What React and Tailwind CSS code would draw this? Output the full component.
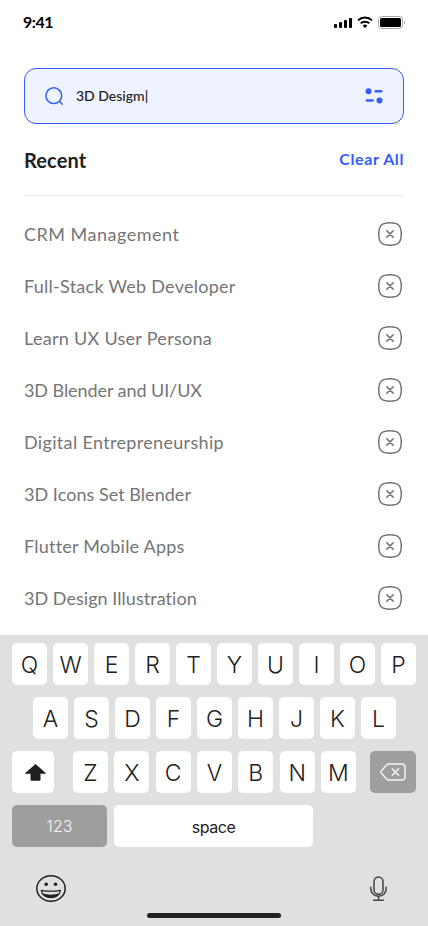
import { useState } from 'react';

const initialSearches = [
  { label: 'CRM Management', spacing: 'tracking-[0.5px]' },
  { label: 'Full-Stack Web Developer', spacing: 'tracking-[0.26px]' },
  { label: 'Learn UX User Persona', spacing: 'tracking-[0.29px]' },
  { label: '3D Blender and UI/UX', spacing: 'tracking-[-0.07px]' },
  { label: 'Digital Entrepreneurship', spacing: 'tracking-[0.33px]' },
  { label: '3D Icons Set Blender', spacing: 'tracking-[0.04px]' },
  { label: 'Flutter Mobile Apps', spacing: 'tracking-[0.22px]' },
  { label: '3D Design Illustration', spacing: 'tracking-[0.04px]' },
];

function StatusBar() {
  return (
    <div className="flex h-11 items-center justify-between pl-[23px] pr-[23px]">
      <span className="text-base leading-5 font-bold tracking-[-0.45px] text-black">9:41</span>
      <div className="flex items-center">
        <svg width="18" height="12" viewBox="0 0 18 12" className="mr-[5px]">
          <rect x="0" y="8" width="3" height="4" rx="1" />
          <rect x="5" y="6" width="3" height="6" rx="1" />
          <rect x="10" y="4" width="3" height="8" rx="1" />
          <rect x="15" y="2" width="3" height="10" rx="1" />
        </svg>
        <svg width="16" height="12" viewBox="0 0 16 12" className="mr-[5px]" fill="none" stroke="#000" strokeWidth="2">
          <path d="M1 4.4a10.1 10.1 0 0 1 14 0" />
          <path d="M3.7 7.4a6.2 6.2 0 0 1 8.6 0" />
          <path d="M8 12 5.7 9.7a3.3 3.3 0 0 1 4.6 0z" fill="#000" stroke="none" />
        </svg>
        <svg width="27" height="13" viewBox="0 0 27 13">
          <rect x="0.5" y="0.5" width="24" height="12" rx="3" fill="none" stroke="#a6a6a6" />
          <rect x="2" y="2" width="21" height="9" rx="1.5" />
          <path d="M26 4.5v4c.7-.3 1-1.1 1-2s-.3-1.7-1-2z" fill="#a6a6a6" />
        </svg>
      </div>
    </div>
  );
}

function SearchField({ value }) {
  return (
    <div className="flex h-14 items-center rounded-xl border border-[#335ef7] bg-[#eff3ff] px-5">
      <svg width="20" height="20" viewBox="0 0 20 20" fill="none" stroke="#335ef7" strokeWidth="1.5">
        <circle cx="8.8" cy="9.7" r="7.9" />
        <path d="m14.4 15.3 2.9 2.9" strokeLinecap="round" />
      </svg>
      <span className="ml-[11px] flex-1 text-sm font-medium text-[#212121]">{value}|</span>
      <svg width="18" height="16" viewBox="0 0 18 16" fill="#335ef7">
        <circle cx="3.5" cy="3.2" r="3" />
        <rect x="9.5" y="2" width="8" height="2.5" rx="1.25" />
        <rect x="0.7" y="11.2" width="8.2" height="2.5" rx="1.25" />
        <circle cx="14.5" cy="12.5" r="3" />
      </svg>
    </div>
  );
}

function CloseIcon() {
  return (
    <svg width="24" height="24" viewBox="0 0 24 24" fill="none" stroke="#757575" strokeWidth="1.5">
      <path d="M12 .75C3.6.75.75 3.6.75 12S3.6 23.25 12 23.25 23.25 20.4 23.25 12 20.4.75 12 .75z" />
      <path d="m8.9 8.9 6.2 6.2m0-6.2-6.2 6.2" strokeLinecap="round" />
    </svg>
  );
}

function Key({ children, className = 'w-[35px] pt-[3px]' }) {
  return (
    <button className={`flex h-[42px] shrink-0 items-center justify-center rounded-[5px] bg-white text-[23px] font-[350] text-[#212121] ${className}`}>
      {children}
    </button>
  );
}

function Keyboard() {
  return (
    <div className="h-[291px] bg-[#e0e0e0] px-3 pt-2 font-['Inter',sans-serif]">
      <div className="flex justify-between">
        {'QWERTYUIOP'.split('').map(k => <Key key={k}>{k}</Key>)}
      </div>
      <div className="mt-3 flex justify-between pr-5 pl-[21px]">
        {'ASDFGHJKL'.split('').map(k => <Key key={k}>{k}</Key>)}
      </div>
      <div className="mt-3 flex">
        <Key className="w-[42px] pl-1">
          <svg width="21" height="17" viewBox="0 0 21 17" fill="#212121">
            <path d="M10.5 0 20.7 9q.5.7-.4.7h-4.8v6q0 1.100-1.100 1.100H6.600q-1.100 0-1.100-1.100v-6H.7q-.9 0-.4-.7z" />
          </svg>
        </Key>
        <div className="ml-[19px] flex w-[283px] justify-between">
          {'ZXCVBNM'.split('').map(k => <Key key={k}>{k}</Key>)}
        </div>
        <button className="ml-auto flex h-[42px] w-[46px] items-center justify-center rounded-[5px] bg-[#9e9e9e]">
          <svg width="26" height="18" viewBox="0 0 26 18" fill="none" stroke="#f5f5f5" strokeWidth="1.4" strokeLinecap="round" strokeLinejoin="round">
            <path d="M8.5 1h13.2Q25 1 25 4.2v9.6q0 3.2-3.3 3.2H8.5q-1 0-1.8-.8L1.3 10q-.8-1 0-2l5.4-6.2Q7.5 1 8.5 1z" />
            <path d="m12.2 5.7 6.4 6.6m0-6.600-6.400 6.600" />
          </svg>
        </button>
      </div>
      <div className="mt-3 flex gap-[7px]">
        <button className="h-[42px] w-[95px] rounded-[5px] bg-[#9e9e9e] text-base font-light text-[#f5f5f5]">123</button>
        <button className="h-[42px] w-[199px] rounded-[5px] bg-white pt-px text-base tracking-[-0.45px] text-[#212121]">space</button>
      </div>
      <div className="mt-7 flex justify-between pr-[29px] pl-6">
        <svg width="30" height="27" viewBox="0 0 30 27" fill="none" stroke="#212121" strokeWidth="1.5">
          <ellipse cx="15" cy="13.5" rx="14.2" ry="12.7" />
          <circle cx="10.2" cy="9.2" r="1.8" fill="#212121" stroke="none" />
          <circle cx="19.5" cy="9.2" r="1.8" fill="#212121" stroke="none" />
          <path d="M5.3 15.3c6.2 1.1 12.9 1.1 19.1 0-.5 4.7-4.6 7.4-9.5 7.4s-9.1-2.7-9.600-7.400z" strokeLinejoin="round" strokeWidth="1.3" />
          <path d="M6.6 18.600c5.200 1.500 11.200 1.500 16.500 0-1.500 2.900-4.300 4.400-8.200 4.400s-6.800-1.500-8.300-4.400z" fill="#212121" stroke="none" />
        </svg>
        <svg width="17" height="26" viewBox="0 0 17 26" className="mt-px" fill="none" stroke="#424242" strokeWidth="1.5" strokeLinecap="round">
          <rect x="4" y=".9" width="9" height="17.3" rx="4.5" />
          <path d="M.8 11.3v1.200c0 4.600 3.200 7.700 7.700 7.700s7.700-3.100 7.700-7.700v-1.200M8.500 20.200v4M3.700 24.300h9.600" />
        </svg>
      </div>
      <div className="mx-auto mt-[11px] h-[5px] w-[134px] rounded-full bg-[#212121]" />
    </div>
  );
}

export default function App() {
  const [searches, setSearches] = useState(initialSearches);

  const removeSearch = label => {
    setSearches(searches.filter(s => s.label !== label));
  };

  return (
    <div className="flex h-[926px] w-[428px] flex-col overflow-hidden bg-white font-['Lato',sans-serif]">
      <StatusBar />
      <div className="flex-1 px-6 pt-6">
        <SearchField value="3D Desigm" />
        <div className="flex h-[72px] items-center justify-between border-b border-[#eeeeee]">
          <h2 className="text-xl font-bold tracking-[0.1px] text-[#212121]">Recent</h2>
          <button className="pb-0.5 text-base font-bold tracking-[0.6px] text-[#335ef7]" onClick={() => setSearches([])}>
            Clear All
          </button>
        </div>
        <ul className="flex flex-col gap-7 pt-[26px]">
          {searches.map(s => (
            <li key={s.label} className="flex h-6 items-center justify-between pr-0.5">
              <span className={`text-lg text-[#757575] ${s.spacing}`}>{s.label}</span>
              <button onClick={() => removeSearch(s.label)}>
                <CloseIcon />
              </button>
            </li>
          ))}
        </ul>
      </div>
      <Keyboard />
    </div>
  );
}
